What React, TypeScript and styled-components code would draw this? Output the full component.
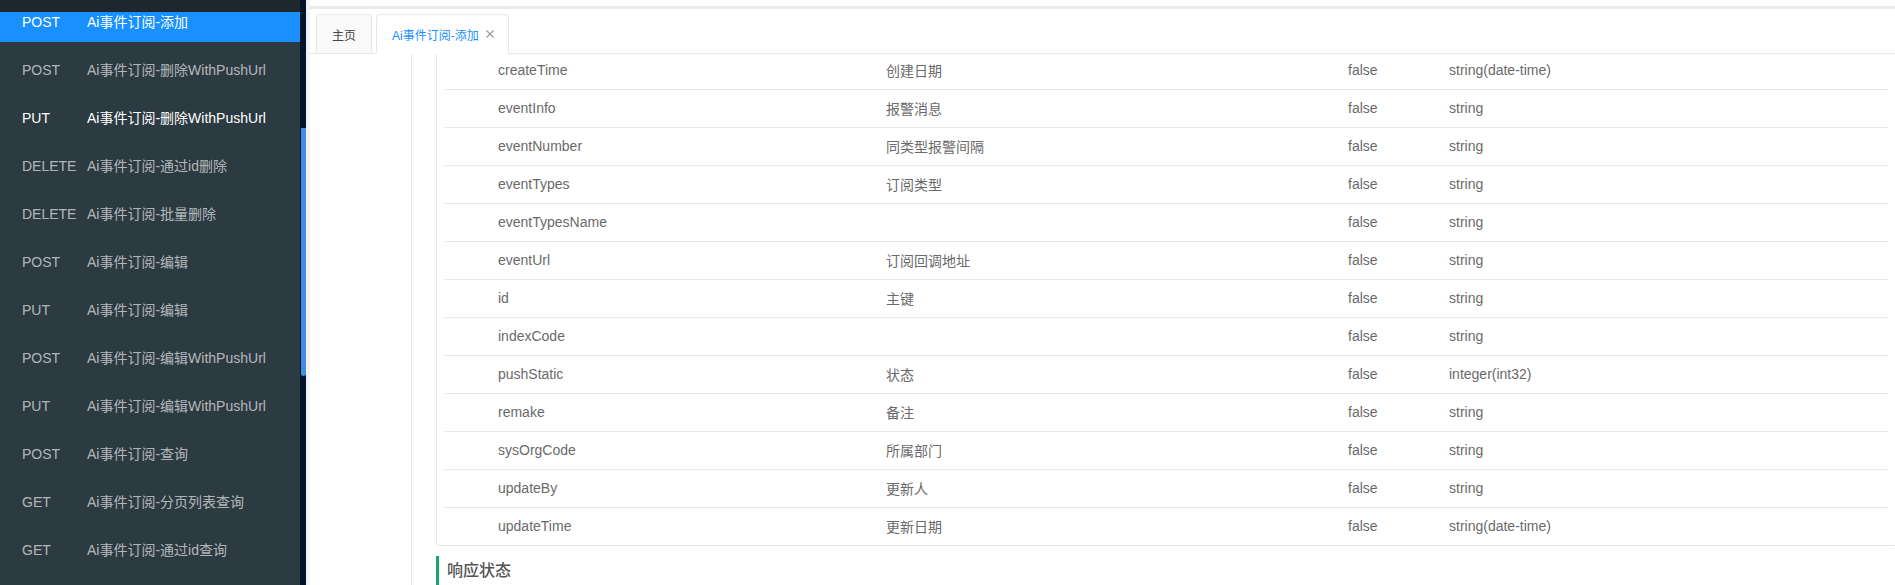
import React from "react";
import styled, { createGlobalStyle } from "styled-components";

const GlobalStyle = createGlobalStyle`
  html, body {
    margin: 0;
    padding: 0;
    height: 100%;
    overflow: hidden;
    background: #ffffff;
    font-family: "Liberation Sans", "Noto Sans CJK SC", Arial, sans-serif;
  }
  #root { height: 100%; }
  * { box-sizing: border-box; }
`;

const Page = styled.div`
  display: flex;
  height: 585px;
  width: 100%;
  overflow: hidden;
`;

const Sidebar = styled.aside`
  width: 300px;
  flex: none;
  display: flex;
  flex-direction: column;
  background: #2c3a41;
  overflow: hidden;
`;

const SidebarTop = styled.div`
  height: 12px;
  flex: none;
  background: #1f272e;
  position: relative;
  z-index: 1;
`;

const MenuViewport = styled.div`
  flex: 1;
  overflow: hidden;
`;

const MenuList = styled.ul`
  list-style: none;
  margin: -10px 0 0;
  padding: 0;
`;

const MenuItem = styled.li<{ $state?: "active" | "hover" }>`
  display: flex;
  height: 40px;
  line-height: 40px;
  margin-bottom: 8px;
  padding-left: 22px;
  font-size: 14px;
  white-space: nowrap;
  background: ${(p) => (p.$state === "active" ? "#1890ff" : "transparent")};
  color: ${(p) => (p.$state ? "#ffffff" : "rgba(255, 255, 255, 0.65)")};
`;

const Method = styled.span`
  width: 65px;
  flex: none;
`;

const ScrollTrack = styled.div`
  width: 6px;
  flex: none;
  background: #001529;
  padding-left: 1px;
`;

const ScrollThumb = styled.div`
  margin-top: 128px;
  height: 248px;
  width: 5px;
  background: #418ee0;
  border-radius: 0 0 3px 3px;
`;

const Gap = styled.div`
  width: 4px;
  flex: none;
  background: #f0f2f5;
`;

const Main = styled.main`
  flex: 1;
  min-width: 0;
  display: flex;
  flex-direction: column;
  background: #ffffff;
`;

const TopSpace = styled.div`
  height: 6px;
  flex: none;
`;

const Band = styled.div`
  height: 3px;
  flex: none;
  background: #e8eaee;
`;

const TabBar = styled.div`
  display: flex;
  align-items: flex-end;
  gap: 4px;
  padding: 5px 0 0 6px;
  border-bottom: 1px solid #e8e8e8;
  flex: none;
`;

const Tab = styled.div<{ $active?: boolean }>`
  display: flex;
  align-items: center;
  gap: 7px;
  padding: ${(p) => (p.$active ? "0 14px 0 15px" : "0 15px")};
  font-size: 12px;
  border: 1px solid #e8e8e8;
  border-radius: 4px 4px 0 0;
  background: ${(p) => (p.$active ? "#ffffff" : "#fafafa")};
  color: ${(p) => (p.$active ? "#1890ff" : "#444444")};
  margin-bottom: ${(p) => (p.$active ? "-1px" : "0")};
  border-bottom: ${(p) => (p.$active ? "1px solid #ffffff" : "none")};
  height: ${(p) => (p.$active ? "40px" : "39px")};
`;

const CloseIcon = styled.svg`
  width: 8px;
  height: 8px;
  flex: none;
`;

const Content = styled.div`
  flex: 1;
  display: flex;
  overflow: hidden;
`;

const Gutter = styled.div`
  width: 101px;
  flex: none;
`;

const Panel = styled.section`
  flex: 1;
  min-width: 0;
  border-left: 1px solid #e8e8e8;
  padding-left: 24px;
  display: flex;
  flex-direction: column;
`;

const Card = styled.div`
  margin: -2px -2px 0 0;
  padding: 0 8px;
  border: 1px solid #e8e8e8;
  border-top: none;
  border-radius: 0 0 4px 4px;
`;

const Row = styled.div`
  display: grid;
  grid-template-columns: 53px 388px 462px 101px 1fr;
  align-items: center;
  height: 38px;
  padding-bottom: 2px;
  border-bottom: 1px solid #e8e8e8;
  font-size: 14px;
  color: #6a6a6a;
  white-space: nowrap;
  &:last-child {
    border-bottom: none;
    height: 37px;
  }
`;

const Heading = styled.h3`
  margin: 10px 0 0;
  padding-left: 8px;
  border-left: 3px solid #1aa46f;
  line-height: 30px;
  font-size: 16px;
  font-weight: 500;
  color: #555555;
`;

const menu: { method: string; name: string; state?: "active" | "hover" }[] = [
  { method: "POST", name: "Ai事件订阅-添加", state: "active" },
  { method: "POST", name: "Ai事件订阅-删除WithPushUrl" },
  { method: "PUT", name: "Ai事件订阅-删除WithPushUrl", state: "hover" },
  { method: "DELETE", name: "Ai事件订阅-通过id删除" },
  { method: "DELETE", name: "Ai事件订阅-批量删除" },
  { method: "POST", name: "Ai事件订阅-编辑" },
  { method: "PUT", name: "Ai事件订阅-编辑" },
  { method: "POST", name: "Ai事件订阅-编辑WithPushUrl" },
  { method: "PUT", name: "Ai事件订阅-编辑WithPushUrl" },
  { method: "POST", name: "Ai事件订阅-查询" },
  { method: "GET", name: "Ai事件订阅-分页列表查询" },
  { method: "GET", name: "Ai事件订阅-通过id查询" },
];

const fields: [string, string, string, string][] = [
  ["createTime", "创建日期", "false", "string(date-time)"],
  ["eventInfo", "报警消息", "false", "string"],
  ["eventNumber", "同类型报警间隔", "false", "string"],
  ["eventTypes", "订阅类型", "false", "string"],
  ["eventTypesName", "", "false", "string"],
  ["eventUrl", "订阅回调地址", "false", "string"],
  ["id", "主键", "false", "string"],
  ["indexCode", "", "false", "string"],
  ["pushStatic", "状态", "false", "integer(int32)"],
  ["remake", "备注", "false", "string"],
  ["sysOrgCode", "所属部门", "false", "string"],
  ["updateBy", "更新人", "false", "string"],
  ["updateTime", "更新日期", "false", "string(date-time)"],
];

export default function App() {
  return (
    <>
      <GlobalStyle />
      <Page>
        <Sidebar>
          <SidebarTop />
          <MenuViewport>
            <MenuList>
              {menu.map((m, i) => (
                <MenuItem key={i} $state={m.state}>
                  <Method>{m.method}</Method>
                  <span>{m.name}</span>
                </MenuItem>
              ))}
            </MenuList>
          </MenuViewport>
        </Sidebar>
        <ScrollTrack>
          <ScrollThumb />
        </ScrollTrack>
        <Gap />
        <Main>
          <TopSpace />
          <Band />
          <TabBar>
            <Tab>主页</Tab>
            <Tab $active>
              <span>Ai事件订阅-添加</span>
              <CloseIcon viewBox="0 0 8 8">
                <path d="M0.5 0.5 L7.5 7.5 M7.5 0.5 L0.5 7.5" stroke="#999" strokeWidth="1.1" fill="none" />
              </CloseIcon>
            </Tab>
          </TabBar>
          <Content>
            <Gutter />
            <Panel>
              <Card>
                {fields.map((f) => (
                  <Row key={f[0]}>
                    <span />
                    <span>{f[0]}</span>
                    <span>{f[1]}</span>
                    <span>{f[2]}</span>
                    <span>{f[3]}</span>
                  </Row>
                ))}
              </Card>
              <Heading>响应状态</Heading>
            </Panel>
          </Content>
        </Main>
      </Page>
    </>
  );
}
